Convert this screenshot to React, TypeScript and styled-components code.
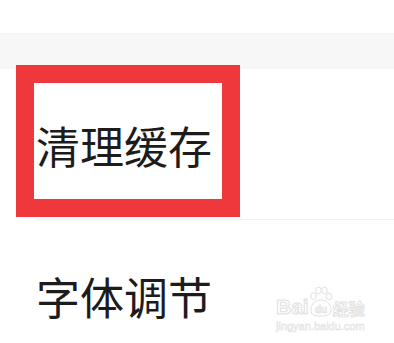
import React from "react";
import styled, { createGlobalStyle } from "styled-components";

const GlobalStyle = createGlobalStyle`
  html, body {
    margin: 0;
    padding: 0;
    background: #ffffff;
  }
  body {
    font-family: "Noto Sans CJK SC", "Noto Sans", sans-serif;
    overflow: hidden;
  }
`;

function App() {
  return (
    <Page>
      <GlobalStyle />
      <TopSpace />
      <SectionGap />
      <Row>
        <Label>清理缓存</Label>
        <Highlight />
      </Row>
      <Row $last>
        <Label>字体调节</Label>
        <Watermark>
          <MarkLine>
            <MarkText>Bai</MarkText>
            <Paw width="24" height="32" viewBox="0 0 24 32">
              <ellipse cx="4.5" cy="10" rx="2.8" ry="3.4" />
              <ellipse cx="9.5" cy="4.5" rx="2.8" ry="3.4" />
              <ellipse cx="15.5" cy="4.5" rx="2.8" ry="3.4" />
              <ellipse cx="20" cy="10.5" rx="2.8" ry="3.4" />
              <path d="M2 24 C2 17 7 14 12 14 C17 14 22 17 22 24 C22 29 18 30 12 30 C6 30 2 29 2 24 Z" />
              <text x="12" y="27" textAnchor="middle">du</text>
            </Paw>
            <MarkCjk>经验</MarkCjk>
          </MarkLine>
          <MarkUrl>jingyan.baidu.com</MarkUrl>
        </Watermark>
      </Row>
    </Page>
  );
}

export default App;

const Page = styled.div`
  width: 394px;
  height: 343px;
  overflow: hidden;
  background: #ffffff;
`;

const TopSpace = styled.div`
  height: 33px;
`;

const SectionGap = styled.div`
  height: 36px;
  background: #f7f7f7;
  border-top: 1px solid #f3f3f3;
  box-sizing: border-box;
`;

const Row = styled.div<{ $last?: boolean }>`
  position: relative;
  height: 151px;
  display: flex;
  align-items: center;
  padding-left: 36px;
  box-sizing: border-box;
  &::after {
    content: "";
    position: absolute;
    left: 36px;
    right: 0;
    bottom: 0;
    height: 1px;
    background: ${(p) => (p.$last ? "transparent" : "#f0f0f0")};
  }
`;

const Label = styled.span`
  font-size: 44px;
  line-height: 1;
  color: #1c1c1c;
`;

const Highlight = styled.div`
  position: absolute;
  left: 16px;
  top: -4px;
  width: 224px;
  height: 152px;
  box-sizing: border-box;
  border: 18px solid #ee383b;
  pointer-events: none;
`;

const Watermark = styled.div`
  position: absolute;
  left: 276px;
  top: 60px;
  display: flex;
  flex-direction: column;
  align-items: flex-start;
`;

const MarkLine = styled.div`
  display: flex;
  align-items: flex-end;
  height: 38px;
`;

const MarkText = styled.span`
  font-family: "Liberation Sans", sans-serif;
  font-weight: bold;
  font-size: 21px;
  line-height: 22px;
  color: #ffffff;
  -webkit-text-stroke: 1px #e0e0e0;
`;

const MarkCjk = styled.span`
  font-family: "Noto Sans CJK SC", sans-serif;
  font-weight: bold;
  font-size: 16px;
  line-height: 20px;
  color: #ffffff;
  -webkit-text-stroke: 0.8px #e0e0e0;
`;

const Paw = styled.svg`
  fill: #ffffff;
  stroke: #e0e0e0;
  stroke-width: 1;
  text {
    font-family: "Liberation Sans", sans-serif;
    font-size: 10px;
    font-weight: bold;
    fill: #ffffff;
    stroke: #e0e0e0;
    stroke-width: 0.7;
  }
`;

const MarkUrl = styled.span`
  font-family: "Liberation Sans", sans-serif;
  font-size: 11px;
  line-height: 12px;
  margin-top: 2px;
  color: #ffffff;
  -webkit-text-stroke: 0.6px #e2e2e2;
`;
